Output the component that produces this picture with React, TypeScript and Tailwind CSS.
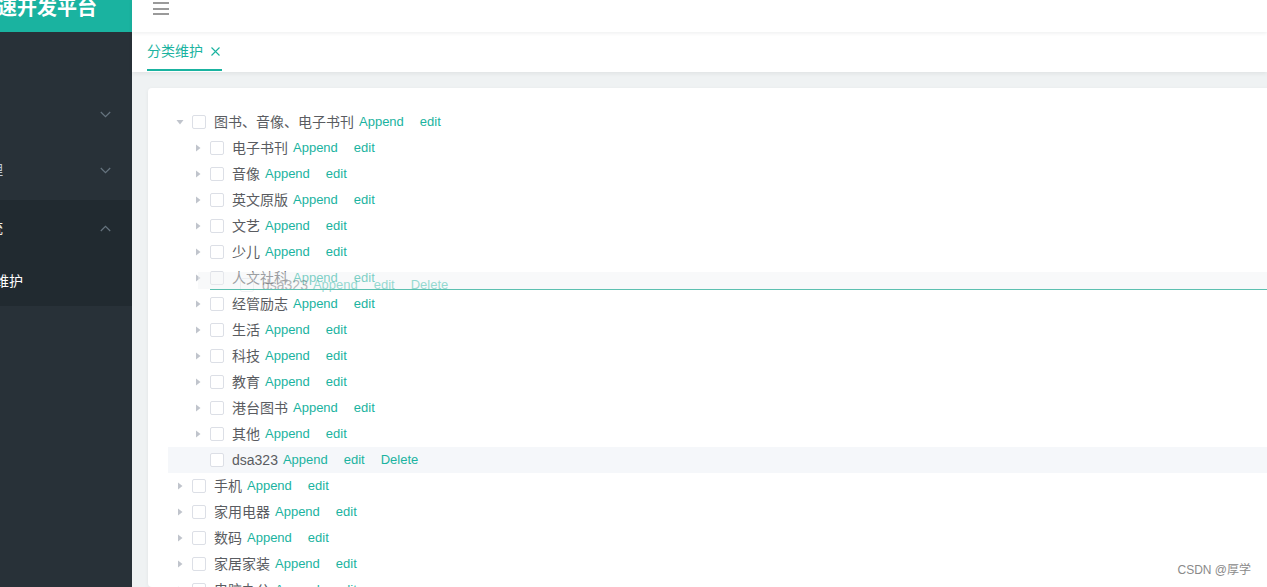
import React from "react";

const TEAL = "text-[#1ab3a0]";

function Caret({ open, hidden }: { open?: boolean; hidden?: boolean }) {
  return (
    <span className="w-[24px] h-[26px] flex items-center justify-center shrink-0">
      {!hidden && (
        <svg width="8" height="8" viewBox="0 0 8 8" className={open ? "rotate-90" : ""}>
          <path d="M2 0.5 L6.5 4 L2 7.5 Z" fill="#c0c4cc" />
        </svg>
      )}
    </span>
  );
}

function Row({
  level,
  label,
  open,
  leaf,
  del,
  highlight,
}: {
  level: number;
  label: string;
  open?: boolean;
  leaf?: boolean;
  del?: boolean;
  highlight?: boolean;
}) {
  return (
    <div className={"flex items-center h-[26px] " + (highlight ? "bg-[#f5f7fa]" : "")}>
      <div className={level === 2 ? "w-[18px] shrink-0" : "w-0"} />
      <Caret open={open} hidden={leaf} />
      <span className="w-[14px] h-[14px] border border-[#dcdfe6] rounded-[2px] bg-white shrink-0 mr-[8px]" />
      <span className="text-[14px] text-[#5a5c61] whitespace-nowrap">{label}</span>
      <span className={"ml-[5px] text-[13px] whitespace-nowrap " + TEAL}>Append</span>
      <span className={"ml-[16px] text-[13px] whitespace-nowrap " + TEAL}>edit</span>
      {del && <span className={"ml-[16px] text-[13px] whitespace-nowrap " + TEAL}>Delete</span>}
    </div>
  );
}

function Chevron({ up }: { up?: boolean }) {
  return (
    <svg width="11" height="7" viewBox="0 0 11 7" className={up ? "rotate-180" : ""}>
      <path d="M0.8 1 L5.5 5.6 L10.2 1" stroke="#66747f" strokeWidth="1.2" fill="none" />
    </svg>
  );
}

export default function App() {
  const children = ["电子书刊", "音像", "英文原版", "文艺", "少儿", "人文社科", "经管励志", "生活", "科技", "教育", "港台图书", "其他"];
  const tops = ["手机", "家用电器", "数码", "家居家装", "电脑办公"];
  return (
    <div
      className="relative flex w-[1267px] h-[587px] overflow-hidden"
      style={{ fontFamily: '"Liberation Sans","Noto Sans CJK SC",sans-serif' }}
    >
      {/* Sidebar */}
      <div className="w-[132px] shrink-0 flex flex-col bg-[#283138] overflow-hidden">
        <div className="h-[32px] bg-[#1ab3a0] overflow-hidden shrink-0">
          <div className="ml-[-23px] mt-[-3px] text-[20px] leading-[22px] font-bold text-white whitespace-nowrap">
            快速开发平台
          </div>
        </div>
        <div className="h-[54px] shrink-0" />
        <div className="h-[56px] shrink-0 flex items-center justify-end pr-[21px]">
          <Chevron />
        </div>
        <div className="h-[58px] shrink-0 flex items-center justify-between pr-[21px] pb-[2px]">
          <span className="ml-[-53px] text-[14px] text-[#bfcbd9] whitespace-nowrap">商品管理</span>
          <Chevron />
        </div>
        <div className="bg-[#212a30] shrink-0">
          <div className="h-[56px] flex items-center justify-between pr-[21px]">
            <span className="ml-[-53px] text-[14px] text-[#f2f2ea] whitespace-nowrap">商品系统</span>
            <Chevron up />
          </div>
          <div className="h-[50px] flex items-center">
            <span className="ml-[-33px] text-[14px] text-white whitespace-nowrap">分类维护</span>
          </div>
        </div>
      </div>

      {/* Main */}
      <div className="flex-1 flex flex-col bg-[#eff2f3] min-w-0">
        <div className="relative z-20 h-[32px] shrink-0 bg-white shadow-[0_1px_4px_rgba(0,21,41,0.08)] pl-[21px]">
          <div className="pt-[2px] flex flex-col gap-[3.5px] w-[16px]">
            <span className="h-[2px] bg-[#9a9a9a]" />
            <span className="h-[2px] bg-[#9a9a9a]" />
            <span className="h-[2px] bg-[#9a9a9a]" />
          </div>
        </div>
        <div className="relative z-10 h-[40px] shrink-0 bg-white shadow-[0_2px_4px_rgba(0,0,0,0.06)] pl-[15px] flex">
          <div className="flex items-center h-[39px] pt-[2px] border-b-[2px] border-[#1ab3a0] pr-[2px]">
            <span className="text-[14px] text-[#1ab3a0]">分类维护</span>
            <svg width="9" height="9" viewBox="0 0 9 9" className="ml-[8px]">
              <path d="M0.5 0.5 L8.5 8.5 M8.5 0.5 L0.5 8.5" stroke="#1ab3a0" strokeWidth="1.1" />
            </svg>
          </div>
        </div>
        <div className="flex-1 pt-[16px] pl-[16px] min-h-0">
          <div className="relative bg-white rounded-[4px] shadow-[0_1px_4px_rgba(0,0,0,0.06)] h-full w-[1200px] pt-[21px] pl-[20px]">
            <Row level={1} label="图书、音像、电子书刊" open />
            {children.map((c) => (
              <Row key={c} level={2} label={c} />
            ))}
            <Row level={2} label="dsa323" leaf del highlight />
            {tops.map((c) => (
              <Row key={c} level={1} label={c} />
            ))}

            {/* drag ghost */}
            <div className="absolute left-[50px] top-[184px] w-[1200px] h-[17px] bg-[rgba(240,242,245,0.45)]" />
            <div className="absolute left-[50px] top-[184px] opacity-45">
              <div className="flex items-center h-[26px]">
                <div className="w-[18px]" />
                <span className="w-[24px]" />
                <span className="w-[14px] h-[14px] border border-[#dcdfe6] rounded-[2px] shrink-0 mr-[8px]" />
                <span className="text-[14px] text-[#606266]">dsa323</span>
                <span className={"ml-[5px] text-[13px] " + TEAL}>Append</span>
                <span className={"ml-[16px] text-[13px] " + TEAL}>edit</span>
                <span className={"ml-[16px] text-[13px] " + TEAL}>Delete</span>
              </div>
            </div>
            {/* drop indicator */}
            <div className="absolute left-[62px] top-[201px] w-[1200px] h-[1px] bg-[#5cc0b0]" />
          </div>
        </div>
      </div>

      <div className="absolute right-[16px] bottom-[8px] text-[12px] text-[#8a8a8a]">CSDN @厚学</div>
    </div>
  );
}
